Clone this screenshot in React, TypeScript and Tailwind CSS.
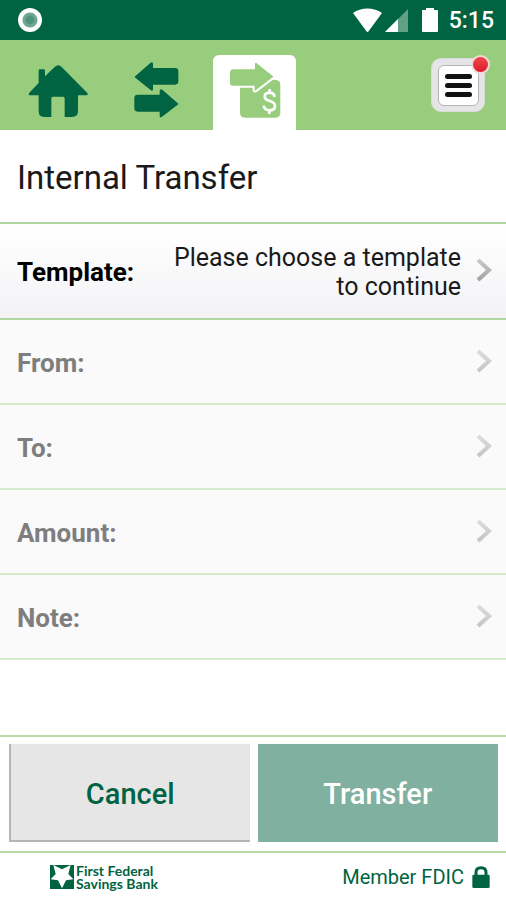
type RowProps = { label: string };

function Chevron() {
  return (
    <svg viewBox="0 0 16 26" className="h-[26px] w-4 shrink-0" aria-hidden="true">
      <defs>
        <linearGradient id="chevron" x1="0" y1="0" x2="0" y2="1">
          <stop offset="0" stopColor="#c9c9c9" />
          <stop offset="1" stopColor="#a3a3a3" />
        </linearGradient>
      </defs>
      <path d="M2 2 L13 12 L2 22" fill="none" stroke="url(#chevron)" strokeWidth="4" />
    </svg>
  );
}

function StatusBar() {
  return (
    <div className="flex h-10 items-center justify-between bg-[#006341] pl-[18px] pr-3">
      <svg viewBox="0 0 24 24" className="size-6" aria-hidden="true">
        <circle cx="12" cy="12" r="12" fill="#fff" />
        <circle cx="12" cy="12" r="7.6" fill="#6fa891" />
        <circle cx="12" cy="12" r="4.4" fill="#4f937a" />
      </svg>
      <div className="flex items-center">
        <svg viewBox="0 0 88 26" className="mr-2 h-[26px] w-[88px]" aria-hidden="true">
          <path d="M0 6 C8 0 21 0 29 6 L15 25 H14Z" fill="#fff" />
          <path d="M32 25 L55 2 V25Z" fill="#60a087" />
          <path d="M32 25 L45 12 V25Z" fill="#fff" />
          <path d="M69 3 H73 V1 H81 V3 H84 Q85 3 85 4 V24 Q85 25 84 25 H70 Q69 25 69 24Z" fill="#fff" />
        </svg>
        <span className="pt-0.5 text-[23px] font-medium leading-10 text-white">5:15</span>
      </div>
    </div>
  );
}

function NavBar() {
  return (
    <header className="flex h-[90px] items-end justify-between bg-[#97cd7d] pr-[21px]">
      <nav className="flex h-full items-end pl-7">
        <button type="button" aria-label="Home" className="mb-3 h-[56px] w-[61px]">
          <svg viewBox="0 0 183 168" className="block size-full">
            <path
              d="M4 92 Q0 99 7 100 H32 V148 Q32 165 48 165 H70 V109 Q70 104 75 104 H105 Q110 104 110 109 V165 H132 Q150 165 150 148 V100 H175 Q182 99 178 93 L101 15 Q91 5 80 15 L51 43 V26 Q51 22 47 22 H36 Q32 22 32 26 V63Z"
              fill="#006341"
            />
          </svg>
        </button>
        <button type="button" aria-label="Transfers" className="mb-3 ml-[44px] h-[58px] w-[47px]">
          <svg viewBox="0 0 141 174" className="block size-full" fill="#006341">
            <path d="M5 50 L52 9 Q60 3 60 12 V24 H126 Q136 24 136 34 V64 Q136 74 126 74 H60 V87 Q60 96 52 89 L5 52Z" />
            <path d="M136 131 L89 90 Q80 84 80 93 V104 H14 Q4 104 4 114 V145 Q4 155 14 155 H80 V168 Q80 176 89 169 L136 133Z" />
          </svg>
        </button>
        <button
          type="button"
          aria-label="Internal transfer"
          aria-current="page"
          className="ml-[33px] flex h-[75px] w-[83px] justify-center rounded-t-md bg-white pt-1.5"
        >
          <svg viewBox="0 0 156 174" className="block h-[58px] w-[52px]">
            <rect x="33" y="57" width="121" height="113" rx="14" fill="#97cd7d" />
            <path
              d="M3 36 Q3 25 14 25 H78 V10 Q78 2 85 8 L131 45 Q134 47 131 49 L80 88 Q77 90 77 86 V74 H11 Q3 74 3 66Z"
              fill="#97cd7d"
              stroke="#fff"
              strokeWidth="12"
              paintOrder="stroke"
            />
            <path
              d="M137 108 Q135 95 121 95 Q107 96 107 106 Q107 116 122 120 Q138 124 138 136 Q137 148 121 148 Q106 147 104 134 M122 84 V96 M121 147 V159"
              fill="none"
              stroke="#fff"
              strokeWidth="8"
            />
          </svg>
        </button>
      </nav>
      <button
        type="button"
        aria-label="Menu, new notifications"
        className="relative mb-[18px] flex size-[54px] items-center justify-center rounded-[10px] border border-[#d9dcd8] bg-[#e5e5e8]"
      >
        <span className="flex size-[41px] flex-col items-center justify-center gap-1 rounded-md border border-[#b5b5b5] bg-white">
          <span className="h-[5px] w-[27px] rounded-sm bg-[#111]" />
          <span className="h-[5px] w-[27px] rounded-sm bg-[#111]" />
          <span className="h-[5px] w-[27px] rounded-sm bg-[#111]" />
        </span>
        <span className="absolute -right-1.5 -top-1 size-[19px] rounded-full border-2 border-[#f3d9d4] bg-linear-to-b from-[#f0444c] to-[#dc1628]" />
      </button>
    </header>
  );
}

function DisabledRow({ label }: RowProps) {
  return (
    <button
      type="button"
      disabled
      className="flex h-[85px] w-full items-center justify-between border-b-2 border-[#d3ebcb] bg-[#fafafa] pl-[17px] pr-3.5"
    >
      <span className="pt-0.5 text-[26px] font-bold leading-8 text-[#7e7e7e]">{label}</span>
      <span className="flex opacity-60">
        <Chevron />
      </span>
    </button>
  );
}

function BankLogo() {
  return (
    <div className="flex items-center gap-0.5 text-[#006341]">
      <svg viewBox="0 0 72 72" className="size-6" aria-hidden="true">
        <rect width="72" height="72" fill="#006341" />
        <path d="M36 13 L62 0 L55 27 L70 43 L48 46 L36 70 L24 46 L2 43 L17 27 L10 0Z" fill="#fff" />
      </svg>
      <span className="flex flex-col font-[Lato,sans-serif] text-[14px] font-bold leading-[13px]">
        <span>First Federal</span>
        <span>Savings Bank</span>
      </span>
    </div>
  );
}

export default function App() {
  return (
    <div className="flex min-h-screen flex-col bg-white font-[Roboto,sans-serif] text-black">
      <StatusBar />
      <NavBar />
      <main className="flex grow flex-col">
        <h1 className="flex h-[94px] items-center border-b-2 border-[#aed8a0] px-[17px] pt-1 text-[33px] leading-10 text-[#1a1a1a]">
          Internal Transfer
        </h1>
        <button
          type="button"
          className="flex h-24 w-full items-center justify-between border-b-2 border-[#aed8a0] bg-linear-to-b from-white to-[#f3f3f6] pl-[17px] pr-3.5"
        >
          <span className="pt-0.5 text-[26px] font-bold leading-8">Template:</span>
          <span className="flex items-center gap-[15px]">
            <span className="w-[300px] pt-0.5 text-right text-[25px] leading-[29px] text-[#1a1a1a]">
              Please choose a template to continue
            </span>
            <Chevron />
          </span>
        </button>
        <DisabledRow label="From:" />
        <DisabledRow label="To:" />
        <DisabledRow label="Amount:" />
        <DisabledRow label="Note:" />
      </main>
      <div className="grid grid-cols-2 gap-2 border-y-2 border-[#b7dca8] pb-[9px] pl-[9px] pr-2 pt-[7px]">
        <button
          type="button"
          className="h-[98px] border-b-2 border-l-2 border-[#b5b5b5] bg-[#e6e6e6] pt-1.5 text-[29px] font-medium text-[#006341]"
        >
          Cancel
        </button>
        <button type="button" disabled className="h-[98px] bg-[#80b09f] pt-1 text-[29px] font-medium text-white">
          Transfer
        </button>
      </div>
      <footer className="flex h-[47px] items-center justify-between pl-[50px] pr-4">
        <BankLogo />
        <div className="flex items-center gap-2 text-[20px] text-[#006341]">
          Member FDIC
          <svg viewBox="0 0 54 66" className="h-[22px] w-[18px]" aria-hidden="true">
            <path d="M12 32 V19 Q12 5 27 5 Q42 5 42 19 V32" fill="none" stroke="#006341" strokeWidth="9" />
            <rect x="1" y="26" width="52" height="40" rx="4" fill="#006341" />
          </svg>
        </div>
      </footer>
    </div>
  );
}
